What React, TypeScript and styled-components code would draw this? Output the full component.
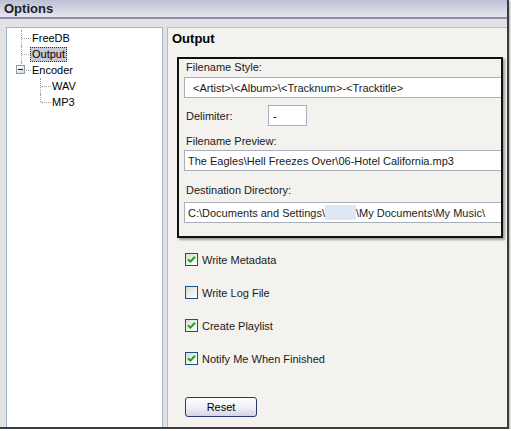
import React from "react";
import styled, { createGlobalStyle } from "styled-components";

const GlobalStyle = createGlobalStyle`
  html, body {
    margin: 0;
    padding: 0;
    background: #ffffff;
  }
  body {
    font-family: "Liberation Sans", Arial, sans-serif;
    font-size: 11px;
    color: #000;
  }
`;

const Window = styled.div`
  width: 509px;
  height: 429px;
  box-sizing: border-box;
  display: flex;
  flex-direction: column;
  background: #e2e2e4;
  border-right: 2px solid #3c3c3c;
  border-bottom: 2px solid #3c3c3c;
  box-shadow: 1px 1px 2px rgba(0, 0, 0, 0.35);
  overflow: hidden;
`;

const TitleBar = styled.div`
  height: 17px;
  display: flex;
  align-items: center;
  padding-left: 4px;
  background: linear-gradient(#bcc0d4, #e6e7ef);
  border-bottom: 2px solid #8f8dab;
  font-size: 13px;
  font-weight: bold;
  color: #1e1e28;
`;

const Body = styled.div`
  flex: 1;
  display: flex;
  gap: 4px;
  padding: 8px 0 0 6px;
  min-height: 0;
`;

const TreePanel = styled.div`
  width: 157px;
  box-sizing: border-box;
  background: #fff;
  border: 1px solid #9fb3cb;
  border-bottom: none;
  padding-top: 2px;
`;

const TreeRow = styled.div`
  position: relative;
  height: 16px;
  display: flex;
  align-items: center;
`;

const Branch = styled.span<{ $x: number; $len: number; $last?: boolean }>`
  position: absolute;
  left: ${(p) => p.$x}px;
  top: 0;
  bottom: ${(p) => (p.$last ? "50%" : "0")};
  border-left: 1px dotted #a3a3a3;

  &::after {
    content: "";
    position: absolute;
    left: 0;
    top: 8px;
    width: ${(p) => p.$len}px;
    border-top: 1px dotted #a3a3a3;
  }
`;

const Expander = styled.span<{ $x: number }>`
  position: absolute;
  left: ${(p) => p.$x}px;
  top: 3px;
  width: 7px;
  height: 7px;
  border: 1px solid #8a9aae;
  background: linear-gradient(135deg, #ffffff, #d8d8d0);
  display: flex;
  align-items: center;
  justify-content: center;

  &::before {
    content: "";
    width: 5px;
    border-top: 1px solid #1e1e1e;
  }
`;

const NodeLabel = styled.span<{ $indent: number; $selected?: boolean }>`
  margin-left: ${(p) => p.$indent}px;
  padding: 0 1px;
  line-height: 13px;
  border: 1px ${(p) => (p.$selected ? "dotted #333" : "solid transparent")};
  background: ${(p) => (p.$selected ? "#c8c9d2" : "transparent")};
`;

const SettingsPanel = styled.div`
  flex: 1;
  display: flex;
  flex-direction: column;
  align-items: flex-start;
  background: #f3f2ee;
  border-top: 1px solid #b3bccb;
  border-left: 1px solid #b3bccb;
  padding-left: 4px;
`;

const Heading = styled.div`
  margin-top: 3px;
  height: 16px;
  line-height: 16px;
  font-size: 13px;
  font-weight: bold;
`;

const FrameBox = styled.div`
  align-self: stretch;
  margin: 10px 4px 0 5px;
  border: 2px solid #111;
  box-shadow: 2px 2px 2px rgba(0, 0, 0, 0.35);
  display: flex;
  flex-direction: column;
  padding: 0 0 13px 5px;
  overflow: hidden;
`;

const FieldLabel = styled.div<{ $top: number }>`
  margin-top: ${(p) => p.$top}px;
  padding-left: 2px;
  line-height: 14px;
  color: #1a1a1a;
`;

const TextField = styled.div<{ $top: number; $pad: number }>`
  margin-top: ${(p) => p.$top}px;
  width: calc(100% + 8px);
  height: 21px;
  box-sizing: border-box;
  display: flex;
  align-items: center;
  padding-left: ${(p) => p.$pad}px;
  background: #fff;
  border: 1px solid #a9b0ba;
  white-space: nowrap;
  color: #1a1a1a;
`;

const Redacted = styled.span`
  display: inline-block;
  width: 31px;
  height: 15px;
  background: #dde8f4;
`;

const DelimiterRow = styled.div`
  margin-top: 7px;
  display: flex;
  align-items: center;
`;

const DelimiterLabel = styled.span`
  width: 82px;
  padding-left: 2px;
  color: #1a1a1a;
`;

const SmallField = styled.div`
  width: 39px;
  height: 21px;
  box-sizing: border-box;
  display: flex;
  align-items: center;
  padding-left: 4px;
  background: #fff;
  border: 1px solid #a9b0ba;
`;

const CheckList = styled.div`
  margin: 15px 0 0 13px;
  display: flex;
  flex-direction: column;
  gap: 20px;
`;

const CheckRow = styled.label`
  display: flex;
  align-items: center;
  height: 13px;
  gap: 4px;
  color: #1a1a1a;
`;

const Box = styled.span`
  width: 13px;
  height: 13px;
  box-sizing: border-box;
  border: 1px solid #1c5180;
  background: linear-gradient(135deg, #dcdcd6, #ffffff);
  display: flex;
  align-items: center;
  justify-content: center;
`;

const ResetButton = styled.button`
  margin: 32px 0 0 13px;
  width: 72px;
  height: 20px;
  border: 1px solid #2b3a6a;
  border-radius: 3px;
  background: linear-gradient(#ffffff, #ececf4 60%, #d4d4e4);
  font-family: "Liberation Sans", Arial, sans-serif;
  font-size: 11px;
  color: #000;
  padding: 0;
`;

function CheckBox({ checked, label }: { checked: boolean; label: string }) {
  return (
    <CheckRow>
      <Box>
        {checked && (
          <svg width="9" height="9" viewBox="0 0 9 9">
            <path d="M1 4.2 L3.4 6.6 L8 1.8" stroke="#21a121" strokeWidth="2" fill="none" />
          </svg>
        )}
      </Box>
      {label}
    </CheckRow>
  );
}

const options = [
  { label: "Write Metadata", checked: true },
  { label: "Write Log File", checked: false },
  { label: "Create Playlist", checked: true },
  { label: "Notify Me When Finished", checked: true },
];

export default function App() {
  return (
    <>
      <GlobalStyle />
      <Window>
        <TitleBar>Options</TitleBar>
        <Body>
          <TreePanel>
            <TreeRow>
              <Branch $x={14} $len={9} />
              <NodeLabel $indent={23}>FreeDB</NodeLabel>
            </TreeRow>
            <TreeRow>
              <Branch $x={14} $len={9} />
              <NodeLabel $indent={23} $selected>
                Output
              </NodeLabel>
            </TreeRow>
            <TreeRow>
              <Branch $x={14} $len={9} $last />
              <Expander $x={9} />
              <NodeLabel $indent={23}>Encoder</NodeLabel>
            </TreeRow>
            <TreeRow>
              <Branch $x={33} $len={10} />
              <NodeLabel $indent={43}>WAV</NodeLabel>
            </TreeRow>
            <TreeRow>
              <Branch $x={33} $len={10} $last />
              <NodeLabel $indent={43}>MP3</NodeLabel>
            </TreeRow>
          </TreePanel>

          <SettingsPanel>
            <Heading>Output</Heading>
            <FrameBox>
              <FieldLabel $top={1}>Filename Style:</FieldLabel>
              <TextField $top={3} $pad={8}>
                {"<Artist>\\<Album>\\<Tracknum>-<Tracktitle>"}
              </TextField>
              <DelimiterRow>
                <DelimiterLabel>Delimiter:</DelimiterLabel>
                <SmallField>-</SmallField>
              </DelimiterRow>
              <FieldLabel $top={8}>Filename Preview:</FieldLabel>
              <TextField $top={2} $pad={3}>
                The Eagles\Hell Freezes Over\06-Hotel California.mp3
              </TextField>
              <FieldLabel $top={12}>Destination Directory:</FieldLabel>
              <TextField $top={5} $pad={3}>
                C:\Documents and Settings\<Redacted />\My Documents\My Music\
              </TextField>
            </FrameBox>

            <CheckList>
              {options.map((o) => (
                <CheckBox key={o.label} checked={o.checked} label={o.label} />
              ))}
            </CheckList>

            <ResetButton>Reset</ResetButton>
          </SettingsPanel>
        </Body>
      </Window>
    </>
  );
}
